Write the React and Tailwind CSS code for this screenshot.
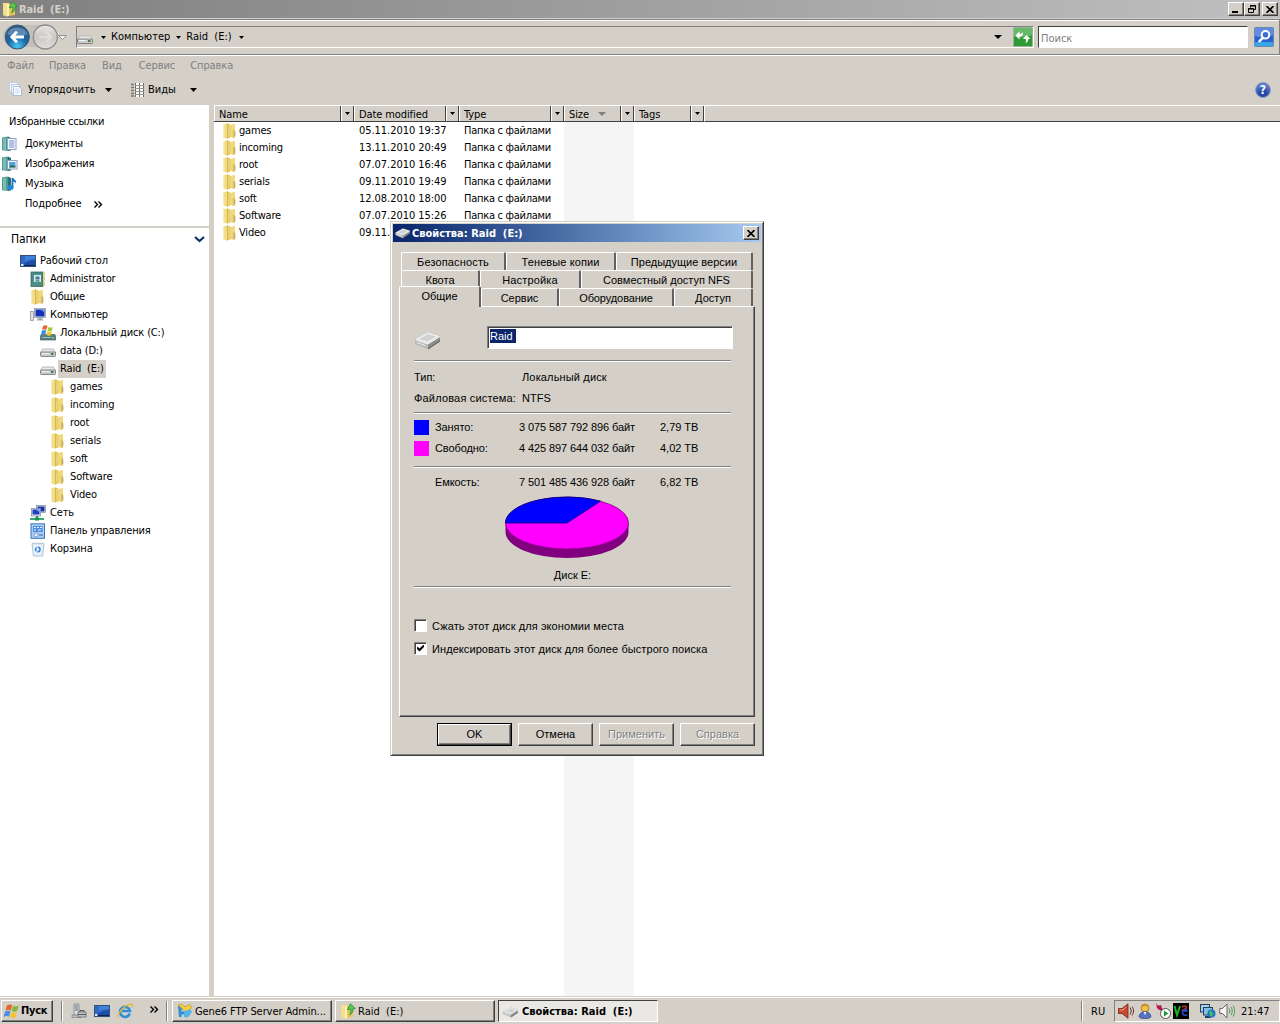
import React from 'react';

const FOLDERS = [
  { name: 'games', date: '05.11.2010 19:37', type: 'Папка с файлами' },
  { name: 'incoming', date: '13.11.2010 20:49', type: 'Папка с файлами' },
  { name: 'root', date: '07.07.2010 16:46', type: 'Папка с файлами' },
  { name: 'serials', date: '09.11.2010 19:49', type: 'Папка с файлами' },
  { name: 'soft', date: '12.08.2010 18:00', type: 'Папка с файлами' },
  { name: 'Software', date: '07.07.2010 15:26', type: 'Папка с файлами' },
  { name: 'Video', date: '09.11.', type: '' },
];

const RAISED = 'border border-t-white border-l-white border-r-[#404040] border-b-[#404040] shadow-[inset_-1px_-1px_0_#808080]';
const SUNKEN = 'border border-t-[#808080] border-l-[#808080] border-r-white border-b-white';

/* ---------- icons ---------- */

const Svg = ({ w = 16, h = 16, className = '', children }) => (
  <svg width={w} height={h} viewBox={`0 0 ${w} ${h}`} className={`shrink-0 ${className}`}>
    {children}
  </svg>
);

const Arrow = ({ w = 5, h = 3, color = '#000', className = '' }) => (
  <Svg w={w} h={h} className={className}>
    <path d={`M0 0H${w}L${w / 2} ${h}Z`} fill={color} />
  </Svg>
);

const FolderIcon = () => (
  <Svg>
    <path d="M1 1.5 5 .3l3 1V14l-3 1.700L1 14.200Z" fill="#f2dd84" />
    <path d="M7.500 2.200 13 .8v9.700l-.6 4.200-4.900-.8Z" fill="#f0da7c" />
    <path d="M5 .6 8.200 1.800v12.400L5 15.500Z" fill="#d8b84e" />
    <path d="M6.300 1.400 7.800 2v11.600l-1.500.7Z" fill="#efd98a" />
    <path d="M10.800 6.500 13.200 7.500v6.700l-2.400.7Z" fill="#e2c25a" />
    <path d="M1.700 2v12" stroke="#faf1c0" />
    <path d="M12.700 8.500v4.500" stroke="#aba782" />
  </Svg>
);

const FolderUpIcon = () => (
  <Svg>
    <path d="M1 2h6v12l-3 1.5L1 14Z" fill="#f3df8a" />
    <path d="M7 3h6v11l-6 .8Z" fill="#e6c65c" />
    <path d="M5 3.5 7 3v12l-2 .6Z" fill="#fbf2bd" />
    <path d="M10.500.8 15.300 5.500l-2.200.1c.1 2.900-.8 5-3.600 6.200C10.700 9.900 11 8 10.700 6.200L7.300 6.800Z" fill="#5cc955" stroke="#2b8f27" strokeWidth=".8" />
  </Svg>
);

const DriveIcon = () => (
  <Svg>
    <path d="M2.500 6h11l2 3.500H.5Z" fill="#e9e9e9" stroke="#a5a5a5" strokeWidth=".7" />
    <rect x=".5" y="9" width="15" height="4.500" rx="1" fill="#c9cbcd" stroke="#6d6f72" strokeWidth=".8" />
    <path d="M2 10.500h7" stroke="#f5f5f5" />
    <rect x="11" y="10" width="3" height="2" fill="#56705c" />
    <rect x="13" y="10" width="1" height="2" fill="#69c26a" />
  </Svg>
);

const SystemDriveIcon = () => (
  <Svg>
    <path d="M1 9.500h14l.7 2.500v3H.3v-3Z" fill="#597d80" stroke="#3c5558" strokeWidth=".6" />
    <path d="M2 12.500h9" stroke="#9fc0c1" />
    <rect x="12" y="12" width="2" height="1.500" fill="#6ee06e" />
    <path d="M3 1c2-1.200 3-1 4.500 0L6.500 4.800c-1.300-.8-2.800-.7-4.300 0Z" fill="#e2662d" />
    <path d="M8.300 2c1.500.8 3 .8 4.500 0L11.800 6c-1.500.7-2.800.6-4.300-.2Z" fill="#a8c93a" />
    <path d="M2 5.500c1.600-.8 3-.7 4.300.1L5.300 9.800H1Z" fill="#3d8fd9" />
    <path d="M7.300 6.300c1.500.8 3 .8 4.500.1l-1 4c-1.500.5-3 .3-4.300-.4Z" fill="#f5c52d" />
  </Svg>
);

const DiskIcon = ({ w = 28, h = 20 }) => (
  <svg width={w} height={h} viewBox="0 0 28 20" className="shrink-0">
    <path d="M1 9 14 2l12 4v5l-12 8L1 13.500Z" fill="#8c8c8c" />
    <path d="M1 9 14 2l12 4-12 7.500Z" fill="#ececec" />
    <path d="M5 9l9-5 8 2.500-8.500 4.700Z" fill="#cfd1d2" />
    <path d="M1 9l13 4.500V19L1 13.500Z" fill="#b9bbbd" />
    <path d="M1.500 9.500 14 14l12-7.500" stroke="#fff" fill="none" />
    <path d="m3 12.500 8 3" stroke="#eee" />
    <path d="M14 19l12-8" stroke="#555" />
  </svg>
);

const DesktopIcon = () => (
  <Svg>
    <rect x=".5" y="2.500" width="15" height="11" fill="#1d4fa8" stroke="#32507c" />
    <path d="M1 3h14v4C10 7 6 9 1 12Z" fill="#3468c4" />
    <path d="M5 3h10v3C11 6 8 7 5 8Z" fill="#3f80da" />
    <path d="M1 12.500h14" stroke="#10244e" />
    <rect x="1" y="11" width="2.500" height="2" fill="#d5e9f7" />
  </Svg>
);

const BookIcon = ({ kind }) => (
  <Svg>
    <path d="M0 1.500 6 .5v14.500l-6-.8Z" fill="#4f9c92" />
    <path d="M1 2.300 4 2v12l-3-.4Z" fill="#78bdb3" />
    <path d="M6 .5 9 2v12.500L6 15Z" fill="#2d6f74" />
    {kind === 'docs' && (
      <>
        <rect x="5.500" y="2.500" width="8.500" height="11" fill="#f5f9ff" stroke="#8ea4c2" />
        <path d="M7 5h5.500M7 7h5.500M7 9h5.500M7 11h5.500" stroke="#6d8fc4" />
      </>
    )}
    {kind === 'pics' && (
      <>
        <rect x="5.500" y="4.500" width="9.500" height="8.500" fill="#f7fbff" stroke="#8ea4c2" />
        <rect x="7" y="6" width="6.500" height="5.500" fill="#56a3d8" />
        <path d="m7 11.500 2.500-2.500 4 1v1.500Z" fill="#2e6c53" />
      </>
    )}
    {kind === 'music' && (
      <>
        <path d="M10.500 2v9" stroke="#1672c8" strokeWidth="1.800" />
        <path d="M10.500 1.500c1 2 4.500 2.500 3.500 6-.6-1.500-2-2-3.500-2Z" fill="#1672c8" />
        <ellipse cx="8.600" cy="11.500" rx="3" ry="2.500" fill="#2286df" />
      </>
    )}
  </Svg>
);

const UserIcon = () => (
  <Svg>
    <rect x="1" y="1" width="12" height="14.500" fill="#4b8f88" stroke="#2a5b57" strokeWidth=".7" />
    <rect x="4" y="4" width="7" height="7" fill="#d7ebf2" />
    <rect x="5.500" y="5.500" width="4" height="3" fill="#4e7895" />
    <path d="M5 10.500c1-2 4-2 5 0Z" fill="#3f8a68" />
    <path d="M13 1h2v4h-2zM13 6h2v4h-2zM13 11h2v4h-2z" fill="#e8d37a" />
  </Svg>
);

const ComputerIcon = () => (
  <Svg>
    <rect x=".5" y="4.500" width="3" height="9" fill="#dcdcdc" stroke="#8d8d8d" strokeWidth=".7" />
    <rect x="4.500" y="1.500" width="11" height="9" fill="#dfe3ea" stroke="#8790a0" strokeWidth=".7" />
    <rect x="5.500" y="2.500" width="9" height="7" fill="#1630b5" />
    <path d="M10 2.500h4.500v3Z" fill="#6d92ef" />
    <path d="M8 11h4l1.500 2.500h-7Z" fill="#a9adb5" />
  </Svg>
);

const NetworkIcon = () => (
  <Svg>
    <rect x="6.500" y=".5" width="9" height="7" fill="#e4e8ef" stroke="#7d889d" strokeWidth=".7" />
    <rect x="7.500" y="1.500" width="7" height="5" fill="#1732a8" />
    <rect x="1.500" y="3.500" width="9" height="7.500" fill="#e4e8ef" stroke="#7d889d" strokeWidth=".7" />
    <rect x="2.500" y="4.500" width="7" height="5" fill="#1c3fc0" />
    <path d="M6 4.500h3.500v3Z" fill="#7fa0f2" />
    <path d="M7 11v2" stroke="#27935c" strokeWidth="2" />
    <path d="M0 14h14" stroke="#35ab6d" strokeWidth="2" />
    <rect x="5" y="12.500" width="4" height="3" fill="#1f8f55" />
  </Svg>
);

const PanelIcon = () => (
  <Svg>
    <rect x="1" y=".8" width="13.500" height="14.500" fill="#a9cdf3" stroke="#4273b5" />
    <rect x="3" y="3" width="9.500" height="6" fill="#4d8de0" />
    <path d="M4 4.500h2M7 4.500h2M10 4.500h2M4 7h2M8 7h3" stroke="#e5f2ff" />
    <circle cx="6" cy="12" r="2" fill="#eef5ff" stroke="#5b80b8" strokeWidth=".7" />
    <path d="M9 12h4" stroke="#3d69ad" />
  </Svg>
);

const BinIcon = () => (
  <Svg>
    <path d="M2 2.500h12L12.600 15H3.400Z" fill="#e6f1fb" stroke="#9ab3cc" strokeWidth=".8" />
    <path d="M2 2.500h12" stroke="#b9cbdd" strokeWidth="1.500" />
    <circle cx="7.800" cy="8.500" r="2.200" fill="none" stroke="#3580d8" strokeWidth="1.500" strokeDasharray="3.700 .9" />
  </Svg>
);

const WindowsFlag = () => (
  <Svg w={18} h={17}>
    <path d="M4 2.500c2-1.500 3.500-1.200 5.300-.2L7.800 7.600C6 6.600 4.500 6.600 2.500 7.600Z" fill="#e5652c" />
    <path d="M10.200 2.800c1.800 1 3.500 1 5.500 0l-1.500 5.300c-2 1-3.700 1-5.500 0Z" fill="#7fb93b" />
    <path d="M2.200 8.500c2-1.200 3.500-1 5.300 0L6 13.800c-1.800-1-3.500-1-5.500.2Z" fill="#4a8fdd" />
    <path d="M8.400 9c1.800 1 3.500 1 5.500 0l-1.500 5.300c-2 1-3.700 1-5.500 0Z" fill="#f6c233" />
  </Svg>
);

const NavButtons = () => (
  <Svg w={68} h={30}>
    <rect x="3" y="3" width="52" height="22" rx="11" fill="#c2c0bb" />
    <defs>
      <radialGradient id="back" cx=".5" cy=".9" r=".8">
        <stop offset="0" stopColor="#4fc8f4" />
        <stop offset=".5" stopColor="#1b6aa8" />
        <stop offset="1" stopColor="#2d5a88" />
      </radialGradient>
      <linearGradient id="fwd" x1="0" y1="0" x2="0" y2="1">
        <stop offset="0" stopColor="#e9e8e5" />
        <stop offset=".5" stopColor="#c9c7c2" />
        <stop offset="1" stopColor="#e2e0dc" />
      </linearGradient>
    </defs>
    <circle cx="17.300" cy="15" r="12" fill="url(#back)" stroke="#36536f" strokeWidth="1" />
    <path d="M7 12a11 10 0 0 1 20.600 0c-6 3-14 3-20.600 0Z" fill="#8fb3d0" opacity=".5" />
    <path d="M24 15H12.500M17 9.800 11.800 15l5.200 5.200" stroke="#fff" strokeWidth="2.800" fill="none" />
    <circle cx="45.300" cy="15" r="12" fill="url(#fwd)" stroke="#8f8d89" strokeWidth="1.300" />
    <path d="M39 15h11.500M46 9.800l5.200 5.200-5.200 5.200" stroke="#dedcd8" strokeWidth="2.600" fill="none" />
    <path d="M58.500 13.500h8L62.500 17.500Z" fill="#f2f1ef" stroke="#8a8884" strokeWidth=".9" />
  </Svg>
);

const RefreshIcon = () => (
  <Svg w={20} h={20}>
    <rect x=".5" y=".5" width="19" height="19" rx="1" fill="#2f9a35" stroke="#9bb59b" />
    <path d="M1 1h18v7C13 11 6 11 1 9Z" fill="#7fc682" opacity=".7" />
    <path d="M2.500 8.500 6.500 4v2.800c2 0 3-.6 3.500-1.800.3 3-1 4.700-3.500 4.700V12.500Z" fill="#fff" />
    <path d="M13.500 8 17.500 12h-2.300c0 2-.9 3.500-2.700 4 .6-1.300.6-2.500.4-4H9.800Z" fill="#fff" />
  </Svg>
);

const SearchIcon = () => (
  <Svg w={20} h={20}>
    <rect x=".5" y=".5" width="19" height="19" rx="1" fill="#2860cf" stroke="#6b86b5" />
    <path d="M1 1h18v7C13 11 6 11 1 9Z" fill="#86a8ec" opacity=".6" />
    <path d="M1 15h18v4H1Z" fill="#41c3ee" opacity=".7" />
    <circle cx="11.500" cy="7.800" r="3.800" fill="#3c70d8" stroke="#fff" strokeWidth="2" />
    <path d="m8.800 10.800-4 4" stroke="#fff" strokeWidth="2.600" />
  </Svg>
);

const HelpIcon = () => (
  <span className="flex size-4 shrink-0 items-center justify-center rounded-full border border-[#8fa0c8] bg-[#2447a8] text-[12px] leading-none font-bold text-white shadow-[inset_0_4px_4px_#6583cf]">
    ?
  </span>
);

const OrganizeIcon = () => (
  <Svg>
    <rect x="1.500" y=".5" width="8" height="9" fill="#f4f8ff" stroke="#b9c8e0" strokeWidth=".7" />
    <rect x="3.500" y="2.500" width="8" height="9" fill="#f4f8ff" stroke="#a6b9d8" strokeWidth=".7" />
    <path d="M5.500 4.500h5l3 2.500v6.500h-8Z" fill="#fff" stroke="#8ca6cf" strokeWidth=".7" />
    <path d="M7 7h4M7 9h5M7 11h5" stroke="#c2d5f2" />
  </Svg>
);

const ViewsIcon = () => (
  <Svg w={14} h={14}>
    <path d="M0 1.500h3M0 4.500h3M0 7.500h3M0 10.500h3M0 13h3" stroke="#77756f" strokeWidth="1.500" />
    <rect x="4" y="0" width="9" height="14" fill="#fbfbf8" />
    <path d="M4.500 0v14M8.500 0v14M12.500 0v14" stroke="#6c6a65" />
    <path d="M4 2.500h9M4 5.500h9M4 8.500h9M4 11.500h9" stroke="#96948e" />
  </Svg>
);

const ServerIcon = () => (
  <Svg>
    <path d="M3 1h5v11H3Z" fill="#dcdfe2" stroke="#787d83" strokeWidth=".8" />
    <path d="M4 3h3M4 5h3M4 7h3" stroke="#5e6872" />
    <path d="M1 12h9v2.500H1Z" fill="#b8bdc2" stroke="#777" strokeWidth=".6" />
    <path d="M7 9h8v5H7Z" fill="#c4c7c9" stroke="#686c70" strokeWidth=".8" />
    <path d="M9 9V7.500h4V9" stroke="#555" fill="none" />
    <path d="M7 11.500h8" stroke="#555" />
  </Svg>
);

const IeIcon = () => (
  <Svg>
    <path d="M12.800 10.500A5 5 0 1 1 13 8H5" fill="none" stroke="#2a8fdc" strokeWidth="2.600" />
    <path d="M1.500 14.500C-1 11 9 1 14.500 1.200c1.200.3 1 2 .2 3.500" fill="none" stroke="#ecb62a" strokeWidth="1.300" />
  </Svg>
);

const FtpIcon = () => (
  <Svg>
    <path d="M1 3h7v3.500H4.500v2H8v3H4.500V14H2Z" fill="#2d8ed8" />
    <path d="M1 2 5 1l3 3 4-2.500 3 2-3 5-3 1-3-3Z" fill="#f5cd3d" stroke="#ad861b" strokeWidth=".5" />
    <path d="M7 8.500 13 6l2 3-4 5.500-4-.5Z" fill="#55b3ec" />
  </Svg>
);

const VolumeRedIcon = () => (
  <Svg>
    <path d="M.5 5.500H4L10 .8v14.400L4 10.500H.5Z" fill="#c94a32" stroke="#742214" strokeWidth=".8" />
    <path d="M2 7h3l3-3" stroke="#f2a18b" fill="none" />
    <path d="M12 4.500c1.500 2 1.500 5 0 7M14 3.500c2 3 2 6 0 9" stroke="#6c2b1e" fill="none" />
  </Svg>
);

const PersonIcon = () => (
  <Svg>
    <circle cx="8" cy="5" r="4" fill="#f4c04a" stroke="#8a5f13" strokeWidth=".7" />
    <path d="M4 4c0-4 8-4 8 0-2-1-6-1-8 0Z" fill="#c8962a" />
    <path d="M2 14c0-7 12-7 12 0l-3 1.500H5Z" fill="#5673c7" stroke="#33477f" strokeWidth=".7" />
    <path d="m6.500 9 1.500 3 1.500-3Z" fill="#fff" />
  </Svg>
);

const RemoteIcon = () => (
  <Svg>
    <path d="m1 0 2 3 3-1 1 4-3 1-2-2Z" fill="#b3164f" />
    <path d="m3 3 6 6" stroke="#b3164f" strokeWidth="2.500" />
    <circle cx="10.500" cy="10.500" r="5" fill="#fff" stroke="#555" />
    <path d="m9 7.500 4.500 3L9 13.500Z" fill="#1e9b35" />
  </Svg>
);

const VncIcon = () => (
  <Svg>
    <rect width="16" height="16" fill="#000" />
    <path d="m1.500 3 2.500 9 3-9" stroke="#16b52c" strokeWidth="2" fill="none" />
    <path d="M9 4.500c1-2 4.500-2 4.500 0S9 6.500 9 8" stroke="#c32a1c" strokeWidth="1.500" fill="none" />
    <path d="M9 8h5c0-2-4-2-4.500 1s3 4 5 2.500" stroke="#2b45cf" strokeWidth="1.500" fill="none" />
  </Svg>
);

const LanIcon = () => (
  <Svg>
    <rect x=".5" y="1.500" width="9" height="7.500" fill="#a9cde8" stroke="#1e4260" />
    <rect x="3.500" y="4.500" width="9" height="7.500" fill="#87bbe8" stroke="#1e4260" />
    <path d="M5 14h6" stroke="#1e4260" strokeWidth="2" />
    <circle cx="11.500" cy="10.500" r="4" fill="#1b72cf" />
    <path d="M10 7.500c3 0 1 2 3 3s-2 3-3 2.500 1-2-1-3Z" fill="#4bbf50" />
  </Svg>
);

const VolumeIcon = () => (
  <Svg>
    <path d="M.8 5.500H3.500L8 1v14L3.500 10.500H.8Z" fill="#f5f5f5" stroke="#666" />
    <path d="M10 5.500c1 1.500 1 3.500 0 5M12 4c1.700 2.500 1.700 5.500 0 8M14 2.500c2.200 3.500 2.200 7.500 0 11" stroke="#4b9a57" fill="none" />
  </Svg>
);

/* ---------- explorer window ---------- */

const CaptionButton = ({ children }) => (
  <div className={`flex h-[14px] w-4 items-center justify-center bg-[#d4d0c8] ${RAISED}`}>{children}</div>
);

const CloseGlyph = () => (
  <Svg w={8} h={7}>
    <path d="M.5 0 7.500 7M7.500 0 .5 7" stroke="#000" strokeWidth="1.600" />
  </Svg>
);

const TitleBar = () => (
  <div className="flex h-[18px] shrink-0 items-center bg-linear-to-r from-[#808080] to-[#c0c0c0] pr-[2px] pl-[2px] text-[#d4d0c8]">
    <FolderUpIcon />
    <span className="ml-px flex-1 pt-px text-[11px] font-bold tracking-[-0.1px] whitespace-pre">Raid  (E:)</span>
    <CaptionButton>
      <Svg w={8} h={7}><path d="M0 6h6" stroke="#000" strokeWidth="2" /></Svg>
    </CaptionButton>
    <CaptionButton>
      <Svg w={8} h={8}>
        <path d="M2.500 2.500v-2h5v4h-2M2 1h6M.5 3.500h5v4h-5ZM0 4h6" stroke="#000" fill="none" />
      </Svg>
    </CaptionButton>
    <div className="ml-[2px]"><CaptionButton><CloseGlyph /></CaptionButton></div>
  </div>
);

const NavBar = () => (
  <div className="flex h-9 shrink-0 items-center border-t border-r border-b border-[#808080] pr-[5px] shadow-[0_1px_0_#fff,inset_0_1px_0_#fff]">
    <NavButtons />
    <div className={`ml-2 flex h-[22px] w-[958px] items-center ${SUNKEN}`}>
      <div className="pt-[2px]"><DriveIcon /></div>
      <Arrow className="ml-2" />
      <span className="ml-[5px]">Компьютер</span>
      <Arrow className="ml-[6px]" />
      <span className="ml-[5px] whitespace-pre">Raid  (E:)</span>
      <Arrow className="ml-[7px]" />
      <Arrow w={8} h={4} className="mr-[11px] ml-auto" />
      <RefreshIcon />
    </div>
    <div className="ml-1 flex h-[22px] w-[210px] items-center border border-t-[#404040] border-r-white border-b-white border-l-[#404040] bg-white pt-[3px] pl-[2px] text-[#808080]">
      Поиск
    </div>
    <div className="ml-auto"><SearchIcon /></div>
  </div>
);

const MenuBar = () => (
  <div className="flex h-[21px] shrink-0 items-center gap-[15px] pl-[7px] tracking-[-0.1px] text-[#808080]">
    <span>Файл</span>
    <span>Правка</span>
    <span className="ml-px">Вид</span>
    <span className="ml-[2px]">Сервис</span>
    <span>Справка</span>
  </div>
);

const ToolBar = () => (
  <div className="flex h-[29px] shrink-0 items-center pr-[9px] pb-[2px] pl-2">
    <OrganizeIcon />
    <span className="ml-1 w-[77px]">Упорядочить</span>
    <Arrow w={7} h={4} />
    <div className="ml-[19px]"><ViewsIcon /></div>
    <span className="ml-[3px] w-[42px]">Виды</span>
    <Arrow w={7} h={4} />
    <div className="ml-auto"><HelpIcon /></div>
  </div>
);

const FavoriteLink = ({ icon, label }) => (
  <div className="flex h-5 items-center">
    <div className="w-[23px] pl-[2px]">{icon}</div>
    <span className="ml-[2px] tracking-[-0.15px]">{label}</span>
  </div>
);

const TreeRow = ({ pad, icon, label, selected }) => (
  <div className={`flex h-[18px] items-center ${pad}`}>
    {icon}
    <span className={`ml-[2px] flex h-[18px] items-center pr-[2px] pl-[2px] tracking-[-0.15px] whitespace-pre ${selected ? 'bg-[#d4d0c8]' : ''}`}>
      {label}
    </span>
  </div>
);

const Sidebar = () => (
  <div className="flex w-[209px] shrink-0 flex-col bg-white">
    <div className="h-[121px]">
      <div className="flex h-[29px] items-center pt-1 pl-[9px] tracking-[-0.2px]">Избранные ссылки</div>
      <FavoriteLink icon={<BookIcon kind="docs" />} label="Документы" />
      <FavoriteLink icon={<BookIcon kind="pics" />} label="Изображения" />
      <FavoriteLink icon={<BookIcon kind="music" />} label="Музыка" />
      <div className="flex h-5 items-center pl-[25px] tracking-[-0.1px]">
        Подробнее
        <Svg w={9} h={7} className="ml-3">
          <path d="m.5.5 3 3-3 3M4.500.5l3 3-3 3" stroke="#000" strokeWidth="1.400" fill="none" />
        </Svg>
      </div>
    </div>
    <div className="h-[2px] bg-[#d4d0c8]" />
    <div className="flex h-6 items-center justify-between pr-1 pb-[2px] pl-[11px] text-[12px] tracking-[-0.1px]">
      Папки
      <Svg w={11} h={7}><path d="m1 1 4.500 4L10 1" stroke="#12306e" strokeWidth="2.200" fill="none" /></Svg>
    </div>
    <TreeRow pad="pl-[20px]" icon={<DesktopIcon />} label="Рабочий стол" />
    <TreeRow pad="pl-[30px]" icon={<UserIcon />} label="Administrator" />
    <TreeRow pad="pl-[30px]" icon={<FolderIcon />} label="Общие" />
    <TreeRow pad="pl-[30px]" icon={<ComputerIcon />} label="Компьютер" />
    <TreeRow pad="pl-[40px]" icon={<SystemDriveIcon />} label="Локальный диск (C:)" />
    <TreeRow pad="pl-[40px]" icon={<DriveIcon />} label="data (D:)" />
    <TreeRow pad="pl-[40px]" icon={<DriveIcon />} label="Raid  (E:)" selected />
    {FOLDERS.map((f) => (
      <TreeRow key={f.name} pad="pl-[50px]" icon={<FolderIcon />} label={f.name} />
    ))}
    <TreeRow pad="pl-[30px]" icon={<NetworkIcon />} label="Сеть" />
    <TreeRow pad="pl-[30px]" icon={<PanelIcon />} label="Панель управления" />
    <TreeRow pad="pl-[30px]" icon={<BinIcon />} label="Корзина" />
  </div>
);

const HeaderCell = ({ label, sorted }) => (
  <div className="flex h-[17px] border-t border-b border-t-white border-b-[#404040] bg-[#d4d0c8]">
    <div className="flex flex-1 items-center border-r border-l border-r-[#404040] border-l-white pt-px pl-1 leading-none">
      {label}
      {sorted && <Arrow w={8} h={4} color="#808080" className="ml-[9px]" />}
    </div>
    <div className="flex w-[13px] items-center justify-center border-r border-l border-r-[#404040] border-l-white">
      <Arrow />
    </div>
  </div>
);

const Column = ({ width, label, sorted, children }) => (
  <div className={`flex shrink-0 flex-col tracking-[-0.1px] ${width} ${sorted ? 'bg-[#f5f5f5]' : ''}`}>
    <HeaderCell label={label} sorted={sorted} />
    {children}
  </div>
);

const FileList = () => (
  <div className="flex flex-1 bg-white">
    <Column width="w-[140px]" label="Name">
      {FOLDERS.map((f) => (
        <div key={f.name} className="flex h-[17px] items-center pl-[8px]">
          <FolderIcon />
          <span className="ml-px pt-px tracking-[-0.2px]">{f.name}</span>
        </div>
      ))}
    </Column>
    <Column width="w-[105px]" label="Date modified">
      {FOLDERS.map((f) => (
        <div key={f.name} className="flex h-[17px] items-center pt-px pl-[5px] tracking-[-0.05px] whitespace-nowrap">{f.date}</div>
      ))}
    </Column>
    <Column width="w-[105px]" label="Type">
      {FOLDERS.map((f) => (
        <div key={f.name} className="flex h-[17px] items-center pt-px pl-[5px] tracking-[-0.27px] whitespace-nowrap">{f.type}</div>
      ))}
    </Column>
    <Column width="w-[70px]" label="Size" sorted />
    <Column width="w-[70px]" label="Tags" />
    <div className="h-[17px] flex-1 border-t border-b border-l border-t-white border-b-[#404040] border-l-white bg-[#d4d0c8]" />
  </div>
);

/* ---------- properties dialog ---------- */

const Tab = ({ width, label }) => (
  <div className={`flex h-[18px] items-center justify-center rounded-t-[2px] border-t border-r-2 border-l border-t-white border-r-[#606060] border-l-white pt-px ${width}`}>
    {label}
  </div>
);

const Rule = ({ className = '' }) => (
  <div className={`h-[2px] w-[317px] border-t border-b border-t-[#808080] border-b-white ${className}`} />
);

const UsageRow = ({ swatch = '', label, bytes, size }) => (
  <div className="flex h-[21px] items-center">
    <div className={`size-[15px] ${swatch}`} />
    <span className="ml-[6px] w-[84px] pb-[2px] tracking-[-0.1px]">{label}</span>
    <span className="w-[141px] pb-[2px] tracking-[-0.1px]">{bytes}</span>
    <span className="pb-[2px]">{size}</span>
  </div>
);

const UsagePie = () => (
  <Svg w={124} h={64}>
    <path d="M.5 27v9a61.500 26 0 0 0 123 0V27Z" fill="#800080" />
    <ellipse cx="62" cy="27" rx="61.500" ry="26" fill="#ff00ff" stroke="#800080" strokeWidth=".8" />
    <path d="M62 27H.5A61.500 26 0 0 1 95.500 5.200Z" fill="#0000ff" stroke="#000080" strokeWidth=".8" />
  </Svg>
);

const CheckBox = ({ label, checked }) => (
  <div className="flex h-[23px] items-center">
    <div className={`flex size-[13px] items-center justify-center bg-white shadow-[inset_1px_1px_0_#404040] ${SUNKEN}`}>
      {checked && (
        <Svg w={7} h={7}><path d="m0 2.500 2.500 2.500L7 .5" stroke="#000" strokeWidth="2" fill="none" /></Svg>
      )}
    </div>
    <span className="ml-[5px] tracking-[0.08px]">{label}</span>
  </div>
);

const DialogButton = ({ label, disabled, primary }) => (
  <div className={primary ? 'border border-black' : ''}>
    <div
      className={`flex items-center justify-center pb-px ${RAISED} ${primary ? 'h-[21px] w-[73px]' : 'h-[23px] w-[75px]'} ${
        disabled ? 'text-[#808080] [text-shadow:1px_1px_0_#fff]' : ''
      }`}
    >
      {label}
    </div>
  </div>
);

const PropertiesDialog = () => (
  <div className="absolute top-[221px] left-[390px] h-[535px] w-[374px] border border-t-[#d4d0c8] border-r-[#404040] border-b-[#404040] border-l-[#d4d0c8] bg-[#d4d0c8] font-['Liberation_Sans',sans-serif] text-[11px] shadow-[inset_1px_1px_0_#fff,inset_-1px_-1px_0_#808080]">
    <div className="mx-[2px] mt-[2px] flex h-[18px] items-center bg-linear-to-r from-[#0a246a] to-[#a6caf0] pr-[2px] pl-[2px]">
      <DiskIcon w={16} h={12} />
      <span className="ml-px flex-1 pt-px font-['DejaVu_Sans_Condensed',sans-serif] font-bold whitespace-pre text-white">Свойства: Raid  (E:)</span>
      <CaptionButton><CloseGlyph /></CaptionButton>
    </div>

    <div className="mt-[10px] ml-[10px] flex">
      <Tab width="w-[105px] tracking-[0.15px]" label="Безопасность" />
      <Tab width="w-[110px] tracking-[0.1px]" label="Теневые копии" />
      <Tab width="w-[137px]" label="Предыдущие версии" />
    </div>
    <div className="ml-[10px] flex">
      <Tab width="w-[79px]" label="Квота" />
      <Tab width="w-[101px] tracking-[0.15px]" label="Настройка" />
      <Tab width="w-[172px]" label="Совместный доступ NFS" />
    </div>
    <div className="-mt-[2px] ml-[8px] flex items-end">
      <div className="relative z-10 -mb-px flex h-[21px] w-[82px] justify-center rounded-t-[2px] border-t border-r-2 border-l border-t-white border-r-[#606060] border-l-white bg-[#d4d0c8] pt-[2px]">
        Общие
      </div>
      <Tab width="w-[78px]" label="Сервис" />
      <Tab width="w-[115px] tracking-[-0.1px]" label="Оборудование" />
      <Tab width="w-[79px]" label="Доступ" />
    </div>

    <div className="ml-[8px] h-[411px] w-[356px] border border-t-white border-r-[#404040] border-b-[#404040] border-l-white pl-[14px] shadow-[inset_-1px_-1px_0_#808080]">
      <div className="flex h-[53px] items-start pt-[19px]">
        <div className="w-[73px] pt-[4px]"><DiskIcon /></div>
        <div className="flex h-[23px] w-[246px] items-start border border-t-[#808080] border-r-white border-b-white border-l-[#808080] bg-white pt-[2px] pl-[2px] shadow-[inset_1px_1px_0_#404040]">
          <span className="bg-[#0a246a] pr-[3px] leading-[14px] text-white">Raid</span>
        </div>
      </div>
      <Rule />
      <div className="mt-[4px] flex h-[21px] items-center"><span className="w-[108px]">Тип:</span><span className="tracking-[0.15px]">Локальный диск</span></div>
      <div className="flex h-[21px] items-center"><span className="w-[108px] tracking-[0.18px] whitespace-nowrap">Файловая система:</span>NTFS</div>
      <Rule className="mt-[4px]" />
      <div className="pt-[3px]">
        <UsageRow swatch="bg-[#0000ff]" label="Занято:" bytes="3 075 587 792 896 байт" size="2,79 TB" />
        <UsageRow swatch="bg-[#ff00ff]" label="Свободно:" bytes="4 425 897 644 032 байт" size="4,02 TB" />
      </div>
      <Rule className="mt-[7px]" />
      <div className="pt-[4px]">
        <UsageRow label="Емкость:" bytes="7 501 485 436 928 байт" size="6,82 TB" />
      </div>
      <div className="mt-[3px] ml-[91px]"><UsagePie /></div>
      <div className="mt-[7px] h-[19px] w-[317px] text-center leading-[16px]">Диск E:</div>
      <Rule />
      <div className="pt-[26px]">
        <CheckBox label="Сжать этот диск для экономии места" />
        <CheckBox label="Индексировать этот диск для более быстрого поиска" checked />
      </div>
    </div>

    <div className="mt-[6px] flex justify-end gap-[6px] pr-[8px]">
      <DialogButton label="OK" primary />
      <DialogButton label="Отмена" />
      <DialogButton label="Применить" disabled />
      <DialogButton label="Справка" disabled />
    </div>
  </div>
);

/* ---------- taskbar ---------- */

const Divider = () => <div className="h-5 w-[2px] border-r border-l border-r-white border-l-[#808080]" />;

const TaskBar = () => (
  <div className="flex h-7 shrink-0 items-center border-t border-[#d4d0c8] bg-[#d4d0c8] pt-px pl-px shadow-[inset_0_1px_0_#fff]">
    <div className={`flex h-[22px] w-[52px] items-center pl-px font-bold tracking-[-0.3px] ${RAISED}`}>
      <WindowsFlag />
      Пуск
    </div>
    <div className="ml-[8px]"><Divider /></div>
    <div className="ml-[8px] flex w-[95px] items-center gap-[7px]">
      <ServerIcon />
      <DesktopIcon />
      <IeIcon />
      <Svg w={9} h={7} className="mb-1 ml-[10px]">
        <path d="m.5.5 3 3-3 3M4.500.5l3 3-3 3" stroke="#000" strokeWidth="1.400" fill="none" />
      </Svg>
    </div>
    <Divider />
    <div className={`ml-[4px] flex h-[22px] w-[160px] items-center pl-[4px] tracking-[-0.08px] whitespace-nowrap ${RAISED}`}>
      <FtpIcon />
      <span className="ml-[2px] pt-px">Gene6 FTP Server Admin...</span>
    </div>
    <div className={`ml-[3px] flex h-[22px] w-[160px] items-center pl-1 whitespace-pre ${RAISED}`}>
      <FolderUpIcon />
      <span className="ml-[2px] pt-px">Raid  (E:)</span>
    </div>
    <div className="ml-[3px] flex h-[22px] w-[160px] items-center border border-t-[#404040] border-r-white border-b-white border-l-[#404040] bg-[#eae8e4] pt-[2px] pl-1 font-bold whitespace-pre">
      <DiskIcon w={16} h={12} />
      <span className="ml-[3px]">Свойства: Raid  (E:)</span>
    </div>
    <div className="ml-auto"><Divider /></div>
    <span className="ml-[8px] w-[23px] pt-px">RU</span>
    <div className={`flex h-[22px] w-[166px] items-center pl-[3px] ${SUNKEN}`}>
      <VolumeRedIcon />
      <div className="ml-[3px]"><PersonIcon /></div>
      <div className="ml-[2px]"><RemoteIcon /></div>
      <div className="ml-[2px]"><VncIcon /></div>
      <div className="ml-[11px]"><LanIcon /></div>
      <div className="ml-[3px]"><VolumeIcon /></div>
      <span className="ml-[6px] pt-px">21:47</span>
    </div>
  </div>
);

const App = () => (
  <div className="relative flex h-[1024px] w-[1280px] flex-col overflow-hidden bg-[#d4d0c8] font-['DejaVu_Sans_Condensed','DejaVu_Sans',sans-serif] text-[11px] leading-[14px] text-black">
    <TitleBar />
    <div className="h-px shrink-0" />
    <NavBar />
    <MenuBar />
    <ToolBar />
    <div className="flex min-h-0 flex-1">
      <Sidebar />
      <div className="w-[5px] shrink-0" />
      <FileList />
    </div>
    <TaskBar />
    <PropertiesDialog />
  </div>
);

export default App;
